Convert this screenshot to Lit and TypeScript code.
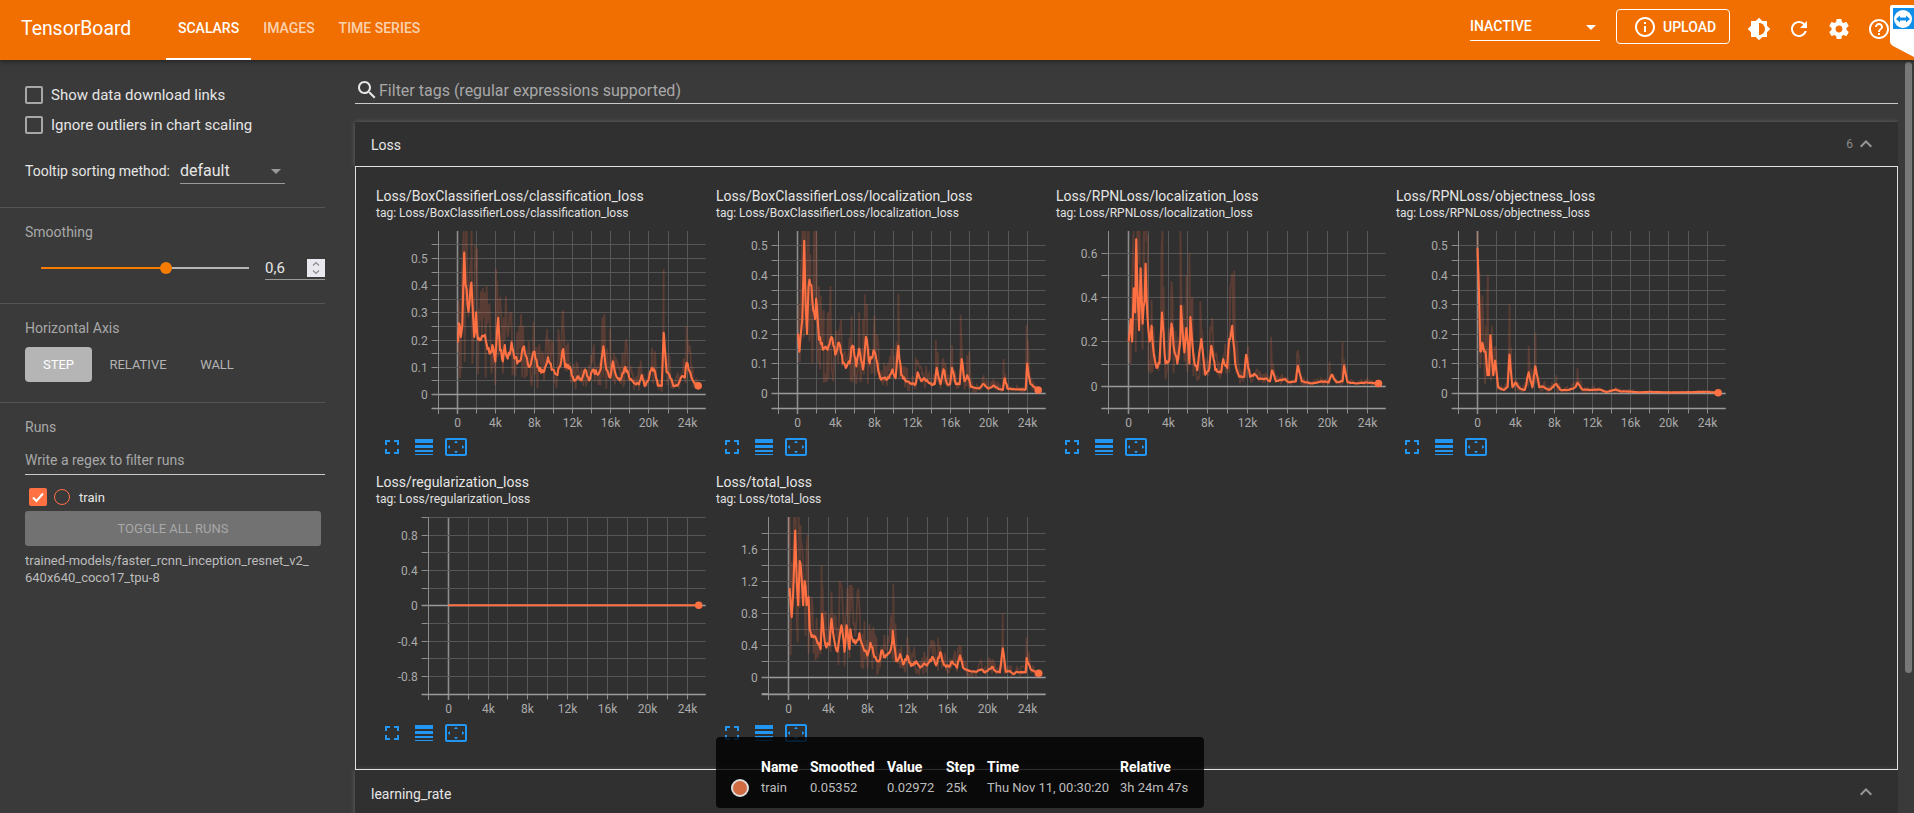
import {customElement, property} from "lit/decorators.js";
import {css, html, LitElement, svg} from "lit";

type Pt = [number, number];

interface ChartDef {
  title: string;
  left: number;
  x0: number;
  pxK: number;
  y0: number;
  perUnit: number;
  grid: number;
  labelEvery: number;
  line: Pt[];
  spikes: Pt[];
}

const ICONS: Record<string, string> = {
  brightness: "M20 15.31L23.31 12 20 8.69V4h-4.69L12 .69 8.69 4H4v4.69L.69 12 4 15.31V20h4.69L12 23.31 15.31 20H20v-4.69zM12 18V6c3.31 0 6 2.69 6 6s-2.69 6-6 6z",
  refresh: "M17.65 6.35C16.2 4.9 14.21 4 12 4c-4.42 0-7.99 3.58-7.99 8s3.57 8 7.99 8c3.73 0 6.84-2.55 7.73-6h-2.08c-.82 2.33-3.04 4-5.65 4-3.31 0-6-2.69-6-6s2.69-6 6-6c1.66 0 3.14.69 4.22 1.78L13 11h7V4l-2.35 2.35z",
  settings: "M19.43 12.98c.04-.32.07-.64.07-.98s-.03-.66-.07-.98l2.11-1.65c.19-.15.24-.42.12-.64l-2-3.46c-.12-.22-.39-.3-.61-.22l-2.49 1c-.52-.4-1.08-.73-1.69-.98l-.38-2.65C14.46 2.18 14.25 2 14 2h-4c-.25 0-.46.18-.49.42l-.38 2.65c-.61.25-1.17.59-1.69.98l-2.49-1c-.23-.09-.49 0-.61.22l-2 3.46c-.13.22-.07.49.12.64l2.11 1.65c-.04.32-.07.65-.07.98s.03.66.07.98l-2.11 1.65c-.19.15-.24.42-.12.64l2 3.46c.12.22.39.3.61.22l2.49-1c.52.4 1.08.73 1.69.98l.38 2.65c.03.24.24.42.49.42h4c.25 0 .46-.18.49-.42l.38-2.65c.61-.25 1.17-.59 1.69-.98l2.49 1c.23.09.49 0 .61-.22l2-3.46c.12-.22.07-.49-.12-.64l-2.11-1.65zM12 15.5c-1.93 0-3.5-1.57-3.5-3.5s1.57-3.5 3.5-3.5 3.5 1.57 3.5 3.5-1.57 3.5-3.5 3.5z",
  help: "M11 18h2v-2h-2v2zm1-16C6.48 2 2 6.48 2 12s4.48 10 10 10 10-4.48 10-10S17.52 2 12 2zm0 18c-4.41 0-8-3.59-8-8s3.59-8 8-8 8 3.59 8 8-3.59 8-8 8zm0-14c-2.21 0-4 1.79-4 4h2c0-1.1.9-2 2-2s2 .9 2 2c0 2-3 1.75-3 5h2c0-2.25 3-2.5 3-5 0-2.21-1.79-4-4-4z",
  info: "M11 7h2v2h-2zm0 4h2v6h-2zm1-9C6.48 2 2 6.48 2 12s4.48 10 10 10 10-4.48 10-10S17.52 2 12 2zm0 18c-4.41 0-8-3.59-8-8s3.59-8 8-8 8 3.59 8 8-3.59 8-8 8z",
  search: "M15.5 14h-.79l-.28-.27C15.41 12.59 16 11.11 16 9.5 16 5.91 13.09 3 9.5 3S3 5.91 3 9.5 5.91 16 9.5 16c1.61 0 3.09-.59 4.23-1.57l.27.28v.79l5 4.99L20.49 19l-4.99-5zm-6 0C7.01 14 5 11.99 5 9.5S7.01 5 9.5 5 14 7.01 14 9.5 11.99 14 9.5 14z",
  expand: "M12 8l-6 6 1.41 1.41L12 10.83l4.59 4.58L18 14z",
  fullscreen: "M7 14H5v5h5v-2H7v-3zm-2-4h2V7h3V5H5v5zm12 7h-3v2h5v-5h-2v3zM14 5v2h3v3h2V5h-5z",
  lineWeight: "M3 17h18v-2H3v2zm0 3h18v-1H3v1zm0-7h18v-3H3v3zm0-9v4h18V4H3z",
  overscan: "M12.01 5.5L10 8h4l-1.99-2.5zM18 10v4l2.5-1.99L18 10zM6 10l-2.5 2.01L6 14v-4zm8 6h-4l2.01 2.5L14 16zm7-13H3c-1.1 0-2 .9-2 2v14c0 1.1.9 2 2 2h18c1.1 0 2-.9 2-2V5c0-1.1-.9-2-2-2zm0 16.01H3V4.99h18v14.02z",
};

const icon = (name: string) => html`<svg class="icon" width="24" height="24" viewBox="0 0 24 24"><path fill-rule="evenodd" d="${ICONS[name]}"></path></svg>`;

const CHARTS: ChartDef[] = [
  {
    title: "Loss/BoxClassifierLoss/classification_loss", left: 71.7, x0: 91, pxK: 9.57, y0: 174, perUnit: 272, grid: 0.05, labelEvery: 2,
    line: [[.1,.19],[.2,.26],[.4,.21],[.55,.25],[.75,.52],[.9,.4],[1.1,.33],[1.3,.33],[1.5,.41],[1.65,.31],[1.8,.21],[2,.3],[2.2,.2],[2.5,.2],[3,.2],[3.3,.17],[3.5,.155],[3.7,.18],[4,.12],[4.2,.24],[4.3,.28],[4.5,.16],[4.8,.12],[5,.18],[5.3,.13],[5.7,.19],[6,.13],[6.5,.12],[6.9,.17],[7.2,.14],[7.6,.1],[8,.155],[8.4,.1],[9,.08],[9.5,.135],[10,.09],[10.5,.07],[10.7,.1],[11.1,.165],[11.3,.1],[11.8,.1],[12.2,.05],[12.6,.065],[13,.05],[13.4,.09],[13.8,.05],[14.2,.09],[14.6,.075],[15,.09],[15.3,.175],[15.6,.09],[16,.06],[16.3,.12],[16.6,.07],[17,.05],[17.6,.1],[18,.06],[18.5,.04],[19,.035],[19.3,.07],[19.6,.03],[20,.05],[20.3,.09],[20.7,.08],[21,.03],[21.4,.03],[21.6,.225],[21.9,.08],[22.2,.07],[22.6,.03],[23,.03],[23.4,.06],[23.8,.06],[24,.115],[24.5,.06],[25,.03],[25.2,.03]],
    spikes: [[.7,.6],[1.5,.5],[2,.46],[4.1,.46],[5.7,.3],[6.9,.25],[8,.26],[9.4,.24],[10.6,.24],[11.2,.22],[15.3,.26],[16,.24],[17.6,.19],[19,.1],[21.6,.46],[24,.25]],
  },
  {
    title: "Loss/BoxClassifierLoss/localization_loss", left: 71.7, x0: 91, pxK: 9.57, y0: 173, perUnit: 295.4, grid: 0.05, labelEvery: 2,
    line: [[.1,.2],[.25,.14],[.4,.2],[.55,.25],[.75,.515],[.9,.3],[1.05,.2],[1.2,.36],[1.5,.365],[1.7,.28],[1.9,.25],[2,.32],[2.3,.18],[2.6,.17],[2.8,.15],[3.3,.16],[3.6,.19],[4,.13],[4.4,.17],[4.8,.1],[5.2,.09],[5.5,.1],[5.8,.16],[6.2,.09],[6.5,.15],[6.9,.08],[7.2,.19],[7.6,.1],[8,.145],[8.4,.1],[8.7,.05],[9,.05],[9.6,.05],[10,.08],[10.3,.05],[10.6,.16],[10.9,.06],[11.5,.04],[12,.03],[12.4,.03],[12.6,.07],[13,.04],[13.3,.05],[14,.03],[14.4,.03],[14.6,.085],[15,.03],[15.3,.08],[15.7,.03],[16,.03],[16.2,.085],[16.6,.03],[17,.03],[17.2,.115],[17.5,.04],[17.8,.06],[18.2,.02],[19,.015],[19.5,.03],[20,.015],[20.6,.025],[21,.015],[21.5,.01],[21.7,.05],[22,.015],[23,.012],[23.9,.012],[24.05,.1],[24.4,.03],[25.2,.01]],
    spikes: [[.7,.55],[1.4,.47],[2,.46],[2.8,.28],[3.3,.27],[5.7,.26],[6.9,.25],[7.1,.31],[8,.2],[10.6,.335],[12.4,.12],[14.5,.18],[15.2,.11],[17.1,.265],[18,.14],[21.6,.115],[24,.23]],
  },
  {
    title: "Loss/RPNLoss/localization_loss", left: 61.5, x0: 81.7, pxK: 9.95, y0: 165.7, perUnit: 221.7, grid: 0.1, labelEvery: 2,
    line: [[.1,.2],[.3,.3],[.45,.2],[.6,.44],[.75,.33],[.85,.66],[1,.4],[1.15,.25],[1.3,.53],[1.5,.28],[1.7,.38],[1.8,.55],[2,.3],[2.2,.2],[2.4,.27],[2.6,.15],[2.9,.08],[3.2,.1],[3.45,.33],[3.8,.1],[4.2,.12],[4.4,.28],[4.7,.15],[5,.1],[5.3,.21],[5.35,.36],[5.7,.15],[5.9,.26],[6.2,.1],[6.3,.31],[6.7,.1],[7,.07],[7.4,.21],[7.8,.05],[8.2,.08],[8.4,.18],[8.8,.07],[9.4,.06],[9.6,.12],[10,.08],[10.2,.21],[10.5,.27],[10.8,.1],[11.2,.04],[11.7,.04],[11.9,.14],[12.3,.04],[12.8,.05],[13.2,.03],[14,.03],[14.3,.02],[14.5,.07],[14.9,.02],[15.8,.03],[16.2,.015],[16.9,.02],[17.1,.09],[17.5,.02],[18.5,.01],[19.5,.02],[20.2,.015],[20.5,.05],[21,.015],[21.6,.02],[21.75,.09],[22.1,.015],[23,.01],[24,.015],[25.2,.01]],
    spikes: [[.6,.7],[1.1,.7],[1.6,.7],[1.8,.7],[2,.68],[3.5,.7],[5.3,.7],[5.9,.5],[6.2,.6],[7.3,.38],[10.7,.52],[11,.2],[14.4,.22],[17,.14],[21.6,.2],[20.3,.11]],
  },
  {
    title: "Loss/RPNLoss/objectness_loss", left: 71.8, x0: 91, pxK: 9.57, y0: 173, perUnit: 295.4, grid: 0.05, labelEvery: 2,
    line: [[.05,.49],[.2,.35],[.35,.14],[.55,.17],[.75,.14],[.9,.14],[1.1,.06],[1.25,.06],[1.4,.195],[1.7,.06],[1.9,.11],[2.2,.02],[2.8,.01],[3.2,.02],[3.4,.13],[3.7,.02],[4,.035],[4.5,.015],[5,.01],[5.4,.07],[5.8,.02],[6.1,.09],[6.5,.02],[7,.02],[7.5,.01],[8.3,.03],[8.7,.01],[9.5,.01],[10.3,.02],[10.5,.035],[11,.012],[12,.01],[12.8,.012],[13.5,.003],[14.5,.012],[15,.005],[16,.005],[17,.002],[18,.004],[20,.002],[21,.002],[24,.004],[25.2,.001]],
    spikes: [[.05,.49],[1.1,.35],[1.15,.4],[3.4,.3],[5.4,.16],[6.1,.205],[8.3,.06],[10.5,.085],[14.5,.02]],
  },
  {
    title: "Loss/regularization_loss", left: 61.7, x0: 81.7, pxK: 9.96, y0: 99.3, perUnit: 88.3, grid: 0.2, labelEvery: 2,
    line: [[.05,0],[25.2,0]],
    spikes: [],
  },
  {
    title: "Loss/total_loss", left: 61.7, x0: 81.7, pxK: 9.96, y0: 171.3, perUnit: 80.2, grid: 0.2, labelEvery: 2,
    line: [[.1,1.1],[.2,1.1],[.4,.75],[.55,1.05],[.75,1.83],[.9,1.2],[1.05,.9],[1.2,1.45],[1.4,1.25],[1.55,.9],[1.7,1.2],[1.9,.9],[2.1,1],[2.2,.6],[2.6,.5],[3,.42],[3.3,.35],[3.45,.79],[3.8,.4],[4.2,.4],[4.4,.73],[4.7,.45],[5,.32],[5.2,.5],[5.4,.65],[5.7,.32],[5.9,.65],[6.2,.35],[6.3,.6],[6.8,.42],[7.2,.55],[7.5,.4],[8,.27],[8.3,.43],[8.7,.25],[9.2,.2],[9.4,.33],[9.8,.25],[10.2,.3],[10.5,.45],[10.55,.58],[10.9,.2],[11.3,.29],[11.6,.16],[12,.27],[12.4,.14],[12.9,.2],[13.3,.12],[13.6,.16],[14,.15],[14.6,.25],[14.9,.15],[15.3,.31],[15.7,.15],[16.2,.13],[16.5,.2],[17,.12],[17.3,.27],[17.6,.12],[18.2,.08],[19,.07],[19.4,.1],[19.8,.06],[20.2,.1],[20.5,.13],[20.9,.07],[21.3,.06],[21.6,.36],[21.9,.07],[22.3,.08],[22.7,.04],[23,.07],[23.9,.06],[24,.24],[24.4,.1],[25.2,.05]],
    spikes: [[.75,1.9],[1.3,1.9],[1.9,1.6],[3.4,1.4],[5.2,1.2],[6.2,1.15],[7.2,.9],[10.6,1.17],[12,.5],[14.6,.45],[15.1,.5],[17.2,.4],[20.2,.25],[21.6,.8],[24,.5]],
  },
];

const PLOT_TOP = 11;
const PLOT_BOTTOM = 188;
const PLOT_RIGHT = 339.7;

function seeded(seed: number) {
  return () => {
    seed = (seed * 1664525 + 1013904223) >>> 0;
    return seed / 4294967296;
  };
}

function interpolate(line: Pt[], k: number) {
  for (let i = 1; i < line.length; i++) {
    if (k <= line[i][0]) {
      const [a, av] = line[i - 1];
      const [b, bv] = line[i];
      return av + ((bv - av) * (k - a)) / (b - a);
    }
  }
  return line[line.length - 1][1];
}

@customElement("tb-scalar-card")
export class TbScalarCard extends LitElement {

  @property({attribute: false}) def?: ChartDef;
  @property({type: Number}) seed = 1;

  static styles = css`
    :host {
      display: block;
      height: 286px;
      padding-top: 9px;
      box-sizing: border-box;
      font-family: Roboto, sans-serif;
    }

    .title {
      margin-left: 10px;
      font-size: 14px;
      line-height: 20px;
      color: #e6e6e6;
      white-space: nowrap;
    }

    .tag {
      margin-left: 10px;
      font-size: 12px;
      line-height: 14px;
      color: #e0e0e0;
      white-space: nowrap;
    }

    .plot {
      display: block;
    }

    .plot text {
      font-family: Roboto, sans-serif;
      font-size: 12px;
      fill: #aaaaaa;
    }

    .actions {
      display: flex;
      margin-left: 10px;
      height: 32px;
    }

    .actions span {
      width: 32px;
      display: flex;
      align-items: center;
      justify-content: center;
    }

    .actions path {
      fill: #2196f3;
    }
  `;

  xPos(k: number) {
    return this.def!.x0 + k * this.def!.pxK;
  }

  yPos(v: number) {
    return this.def!.y0 - v * this.def!.perUnit;
  }

  renderAxes() {
    const d = this.def!;
    const out = [];
    const firstK = Math.ceil((d.left - d.x0) / d.pxK / 2) * 2;
    for (let k = firstK; this.xPos(k) <= PLOT_RIGHT + 1; k += 2) {
      const x = Math.round(this.xPos(k)) + 0.5;
      const zero = k === 0;
      out.push(svg`<line x1="${x}" x2="${x}" y1="${PLOT_TOP}" y2="${PLOT_BOTTOM + 6}" stroke="${zero ? "#8d8d8d" : "#565656"}" stroke-width="${zero ? 1.6 : 1}"></line>`);
      out.push(svg`<line x1="${x}" x2="${x}" y1="${PLOT_BOTTOM}" y2="${PLOT_BOTTOM + 5}" stroke="#8d8d8d"></line>`);
      if (k % 4 === 0) {
        out.push(svg`<text x="${x}" y="207" text-anchor="middle">${k === 0 ? "0" : k + "k"}</text>`);
      }
    }
    const lo = Math.ceil((d.y0 - PLOT_BOTTOM) / d.perUnit / d.grid);
    const hi = Math.floor((d.y0 - PLOT_TOP) / d.perUnit / d.grid);
    for (let i = lo; i <= hi; i++) {
      const y = Math.round(this.yPos(i * d.grid)) + 0.5;
      const zero = i === 0;
      out.push(svg`<line x1="${d.left - 6}" x2="${PLOT_RIGHT}" y1="${y}" y2="${y}" stroke="${zero ? "#9a9a9a" : "#565656"}" stroke-width="${zero ? 1.4 : 1}"></line>`);
      out.push(svg`<line x1="${d.left - 6}" x2="${d.left}" y1="${y}" y2="${y}" stroke="#8d8d8d"></line>`);
      if (i % d.labelEvery === 0) {
        const value = i * d.grid;
        out.push(svg`<text x="${d.left - 10}" y="${y + 4}" text-anchor="end">${i === 0 ? "0" : value.toFixed(1)}</text>`);
      }
    }
    const left = Math.round(d.left) + 0.5;
    out.push(svg`<line x1="${left}" x2="${left}" y1="${PLOT_TOP}" y2="${PLOT_BOTTOM + 6}" stroke="#8d8d8d"></line>`);
    out.push(svg`<line x1="${d.left - 6}" x2="${PLOT_RIGHT}" y1="${PLOT_BOTTOM + 0.5}" y2="${PLOT_BOTTOM + 0.5}" stroke="#9a9a9a" stroke-width="1.4"></line>`);
    return out;
  }

  renderSeries() {
    const d = this.def!;
    const rand = seeded(this.seed * 7919);
    const start = d.line[0][0];
    const end = d.line[d.line.length - 1][0];
    const flat = d.spikes.length === 0;
    const smooth: Pt[] = [...d.line];
    const raw: Pt[] = [...d.spikes];
    for (let k = start; k < end; k += 0.1) {
      const v = interpolate(d.line, k);
      raw.push([k, Math.max(v + (rand() - 0.4) * v * 2, v * 0.1)]);
      if (!flat && !d.line.some(p => Math.abs(p[0] - k) < 0.06)) {
        smooth.push([k, v * (1 + (rand() - 0.5) * 0.22)]);
      }
    }
    const toPoints = (pts: Pt[]) => pts
      .sort((a, b) => a[0] - b[0])
      .map(p => `${this.xPos(p[0]).toFixed(1)},${this.yPos(p[1]).toFixed(1)}`)
      .join(" ");
    const last = d.line[d.line.length - 1];
    return svg`
      <g clip-path="url(#plot-clip)">
        ${flat ? "" : svg`<polyline points="${toPoints(raw)}" fill="none" stroke="#ff7043" stroke-opacity="0.2" stroke-width="1.8"></polyline>`}
        <polyline points="${toPoints(smooth)}" fill="none" stroke="#ff7043" stroke-width="2.1" stroke-linejoin="round"></polyline>
      </g>
      <circle cx="${this.xPos(last[0])}" cy="${this.yPos(last[1])}" r="3.8" fill="#ff7043"></circle>
    `;
  }

  render() {
    const d = this.def;
    if (!d) return html``;
    return html`
      <div class="title">${d.title}</div>
      <div class="tag">tag: ${d.title}</div>
      <svg class="plot" width="340" height="211" viewBox="0 0 340 211">
        <defs>
          <clipPath id="plot-clip">
            <rect x="${d.left}" y="${PLOT_TOP}" width="${PLOT_RIGHT - d.left}" height="${PLOT_BOTTOM - PLOT_TOP}"></rect>
          </clipPath>
        </defs>
        ${this.renderAxes()}
        ${this.renderSeries()}
      </svg>
      <div class="actions">
        <span>${icon("fullscreen")}</span>
        <span>${icon("lineWeight")}</span>
        <span>${icon("overscan")}</span>
      </div>
    `;
  }
}

@customElement("app-root")
export class AppRoot extends LitElement {

  static styles = css`
    * {
      box-sizing: border-box;
    }

    :host {
      display: flex;
      flex-direction: column;
      position: relative;
      height: 100vh;
      overflow: hidden;
      background: #3a3a3a;
      font-family: Roboto, sans-serif;
      font-size: 14px;
      color: #e6e6e6;
    }

    .toolbar {
      flex: none;
      position: relative;
      z-index: 2;
      display: flex;
      align-items: center;
      height: 60px;
      background: #f16e00;
      color: #fff;
      box-shadow: 0 2px 4px rgba(0, 0, 0, 0.35);
    }

    .brand {
      width: 108px;
      margin: 0 37px 4px 21px;
      font-size: 19.4px;
      white-space: nowrap;
    }

    .tabs {
      display: flex;
      align-self: stretch;
    }

    .tab {
      display: flex;
      align-items: center;
      padding: 0 12px 4px;
      font-weight: 500;
      color: rgba(255, 255, 255, 0.7);
    }

    .tab.active {
      color: #fff;
      border-bottom: 2px solid #fff;
      padding-bottom: 2px;
    }

    .toolbar-right {
      display: flex;
      align-items: center;
      margin-left: auto;
      padding-right: 15px;
    }

    .plugin-select {
      position: relative;
      width: 130px;
      height: 27px;
      margin-bottom: 5px;
      line-height: 24px;
      font-weight: 500;
      border-bottom: 1px solid #fff;
    }

    .caret {
      position: absolute;
      right: 4px;
      top: 11px;
      width: 0;
      height: 0;
      border-left: 5px solid transparent;
      border-right: 5px solid transparent;
      border-top: 5px solid #fff;
    }

    .upload {
      display: flex;
      align-items: center;
      gap: 6px;
      height: 35px;
      width: 114px;
      margin: 0 9px 7px 16px;
      padding-left: 16px;
      border: 1px solid #fff;
      border-radius: 4px;
      font-weight: 500;
    }

    .icon {
      display: block;
      flex: none;
      fill: currentColor;
    }

    .toolbar-btn {
      display: flex;
      justify-content: center;
      width: 40px;
      margin-bottom: 2px;
    }

    .layout {
      flex: 1;
      display: flex;
      min-height: 0;
    }

    .sidebar {
      flex: none;
      width: 325px;
    }

    .section {
      padding: 16px 0 23px 25px;
      border-bottom: 1px solid #555;
    }

    .section.first {
      padding-top: 20px;
    }

    .section.axis {
      padding-bottom: 20px;
    }

    .section.last {
      border-bottom: none;
    }

    .check-row {
      display: flex;
      align-items: center;
      gap: 8px;
      height: 30px;
      font-size: 15px;
    }

    .box {
      width: 18px;
      height: 18px;
      border: 2px solid #a8a8a8;
      border-radius: 2px;
    }

    .sort-row {
      display: flex;
      align-items: center;
      height: 26px;
      margin-top: 18px;
    }

    .sort-select {
      position: relative;
      width: 105px;
      height: 26px;
      margin-left: 10px;
      font-size: 16px;
      line-height: 25px;
      border-bottom: 1px solid #999;
    }

    .sort-select .caret {
      border-top-color: #999;
    }

    .label {
      height: 16px;
      line-height: 16px;
      color: #a8a8a8;
    }

    .slider-row {
      display: flex;
      align-items: center;
      height: 24px;
      margin-top: 16px;
    }

    .slider {
      position: relative;
      width: 208px;
      height: 2px;
      margin: 0 16px;
      background: #b5b5b5;
    }

    .slider-fill {
      height: 2px;
      background: #f57c00;
    }

    .slider-thumb {
      position: absolute;
      top: -5px;
      width: 12px;
      height: 12px;
      border-radius: 50%;
      background: #f57c00;
    }

    .number {
      display: flex;
      align-items: center;
      justify-content: space-between;
      width: 60px;
      height: 24px;
      font-size: 15px;
      border-bottom: 1px solid #999;
    }

    .spin {
      display: flex;
      align-items: center;
      justify-content: center;
      width: 18px;
      height: 18px;
      background: #e8e8ee;
    }

    .spin svg {
      display: block;
      fill: none;
      stroke: #8a8a8a;
      stroke-width: 1.2;
    }

    .axis-row {
      display: grid;
      grid-template-columns: 67px 92px 66px;
      height: 35px;
      margin-top: 11px;
      font-size: 13px;
      color: #b4b4b4;
    }

    .axis-row span {
      display: flex;
      align-items: center;
      justify-content: center;
      border-radius: 4px;
    }

    .axis-row .active {
      background: #b5b5b5;
      color: #fff;
    }

    .run-filter {
      width: 300px;
      height: 29px;
      margin-top: 11px;
      line-height: 28px;
      color: #a8a8a8;
      border-bottom: 1px solid #c8c8c8;
    }

    .run-row {
      display: flex;
      align-items: center;
      height: 26px;
      margin-top: 9px;
      padding-left: 4px;
      font-size: 13px;
    }

    .run-check {
      display: flex;
      align-items: center;
      justify-content: center;
      width: 18px;
      height: 18px;
      background: #ff7043;
      border-radius: 2px;
    }

    .run-dot {
      width: 16px;
      height: 16px;
      margin: 0 9px 0 7px;
      border: 1.5px solid #ff7043;
      border-radius: 50%;
    }

    .toggle {
      display: flex;
      align-items: center;
      justify-content: center;
      width: 296px;
      height: 35px;
      margin-top: 1px;
      background: #727272;
      border-radius: 3px;
      font-size: 13px;
      color: #a8a8a8;
    }

    .run-path {
      margin-top: 6px;
      font-size: 13px;
      line-height: 17px;
      color: #bcbcbc;
      white-space: nowrap;
    }

    .main {
      flex: 1;
      min-width: 0;
      padding: 16px 0 0 30px;
      overflow: hidden;
    }

    .filter {
      display: flex;
      align-items: center;
      height: 28px;
      font-size: 16px;
      color: #a8a8a8;
      border-bottom: 1px solid #c8c8c8;
    }

    .filter span {
      padding-top: 2px;
    }

    .filter .icon {
      color: #e6e6e6;
    }

    .pane-head {
      position: relative;
      display: flex;
      align-items: center;
      height: 44px;
      padding: 0 20px 0 16px;
      background: #303030;
      box-shadow: 0 0 5px rgba(255, 255, 255, 0.22);
    }

    .pane-head.loss {
      margin-top: 18px;
    }

    .pane-name {
      flex: 1;
      padding-top: 2px;
      color: #e6e6e6;
    }

    .pane-head.rest .pane-name {
      padding-top: 4px;
    }

    .pane-count {
      margin-right: 1px;
      font-size: 12px;
      color: #8a8a8a;
    }

    .pane-head .icon {
      color: #9a9a9a;
    }

    .pane-body {
      position: relative;
      display: grid;
      grid-template-columns: repeat(4, 340px);
      padding: 10px 0 20px 10px;
      background: #303030;
      border: 1px solid #e0e0e0;
    }

    .scrollbar {
      flex: none;
      position: relative;
      width: 16px;
      background: #3a3a3a;
    }

    .scroll-thumb {
      position: absolute;
      left: 7px;
      top: 2px;
      width: 7px;
      height: 611px;
      border-radius: 4px;
      background: #787878;
    }

    .tooltip {
      position: absolute;
      z-index: 3;
      left: 716px;
      top: 737px;
      display: grid;
      grid-template-columns: 45px 49px 77px 59px 41px 133px 84px;
      grid-auto-rows: 21px;
      align-items: center;
      width: 488px;
      height: 71px;
      padding-top: 19px;
      background: rgba(0, 0, 0, 0.8);
      border-radius: 4px;
      font-size: 13px;
      color: #bdbdbd;
      white-space: nowrap;
    }

    .tooltip b {
      font-size: 14px;
      font-weight: 700;
      color: #fff;
    }

    .swatch {
      justify-self: center;
      width: 18px;
      height: 18px;
      margin-left: 3px;
      border: 2px solid #dcdcdc;
      border-radius: 50%;
      background: #d26a42;
    }

    .remote-badge {
      position: absolute;
      z-index: 4;
      right: 0;
      top: 5px;
      display: block;
    }
  `;

  render() {
    return html`
      <div class="toolbar">
        <div class="brand">TensorBoard</div>
        <div class="tabs">
          <div class="tab active">SCALARS</div>
          <div class="tab">IMAGES</div>
          <div class="tab">TIME SERIES</div>
        </div>
        <div class="toolbar-right">
          <div class="plugin-select">INACTIVE<span class="caret"></span></div>
          <div class="upload">${icon("info")}<span>UPLOAD</span></div>
          <div class="toolbar-btn">${icon("brightness")}</div>
          <div class="toolbar-btn">${icon("refresh")}</div>
          <div class="toolbar-btn">${icon("settings")}</div>
          <div class="toolbar-btn">${icon("help")}</div>
        </div>
      </div>
      <div class="layout">
        <div class="sidebar">
          <div class="section first">
            <div class="check-row"><span class="box"></span>Show data download links</div>
            <div class="check-row"><span class="box"></span>Ignore outliers in chart scaling</div>
            <div class="sort-row">
              Tooltip sorting method:
              <div class="sort-select">default<span class="caret"></span></div>
            </div>
          </div>
          <div class="section">
            <div class="label">Smoothing</div>
            <div class="slider-row">
              <div class="slider">
                <div class="slider-fill" style="width: 125px"></div>
                <div class="slider-thumb" style="left: 119px"></div>
              </div>
              <div class="number">
                0,6
                <span class="spin">
                  <svg width="8" height="14" viewBox="0 0 8 14"><path d="M1 4.5L4 1.5L7 4.5M1 9.5L4 12.5L7 9.5"></path></svg>
                </span>
              </div>
            </div>
          </div>
          <div class="section axis">
            <div class="label">Horizontal Axis</div>
            <div class="axis-row">
              <span class="active">STEP</span>
              <span>RELATIVE</span>
              <span>WALL</span>
            </div>
          </div>
          <div class="section last">
            <div class="label">Runs</div>
            <div class="run-filter">Write a regex to filter runs</div>
            <div class="run-row">
              <span class="run-check">
                <svg width="14" height="14" viewBox="0 0 14 14"><path d="M2 7.5L5.5 11L12 3.5" fill="none" stroke="#fff" stroke-width="2"></path></svg>
              </span>
              <span class="run-dot"></span>
              train
            </div>
            <div class="toggle">TOGGLE ALL RUNS</div>
            <div class="run-path">trained-models/faster_rcnn_inception_resnet_v2_<br>640x640_coco17_tpu-8</div>
          </div>
        </div>
        <div class="main">
          <div class="filter">${icon("search")}<span>Filter tags (regular expressions supported)</span></div>
          <div class="pane-head loss">
            <span class="pane-name">Loss</span>
            <span class="pane-count">6</span>
            ${icon("expand")}
          </div>
          <div class="pane-body">
            ${CHARTS.map((c, i) => html`<tb-scalar-card .def="${c}" .seed="${i + 1}"></tb-scalar-card>`)}
          </div>
          <div class="pane-head rest">
            <span class="pane-name">learning_rate</span>
            ${icon("expand")}
          </div>
        </div>
        <div class="scrollbar"><div class="scroll-thumb"></div></div>
      </div>
      <div class="tooltip">
        <span></span><b>Name</b><b>Smoothed</b><b>Value</b><b>Step</b><b>Time</b><b>Relative</b>
        <span class="swatch"></span><span>train</span><span>0.05352</span><span>0.02972</span><span>25k</span><span>Thu Nov 11, 00:30:20</span><span>3h 24m 47s</span>
      </div>
      <svg class="remote-badge" width="24" height="53" viewBox="0 0 24 53">
        <path d="M2 0H24V52L3 41Q0 39.500 0 37V2Q0 0 2 0Z" fill="#fff"></path>
        <rect x="3" y="3" width="21" height="21" fill="#0e8ee9"></rect>
        <circle cx="13" cy="14" r="9" fill="#fff"></circle>
        <path d="M6 14L10 10.500V12.500H16V10.500L20 14L16 17.500V15.500H10V17.500Z" fill="#0e8ee9"></path>
      </svg>
    `;
  }
}
